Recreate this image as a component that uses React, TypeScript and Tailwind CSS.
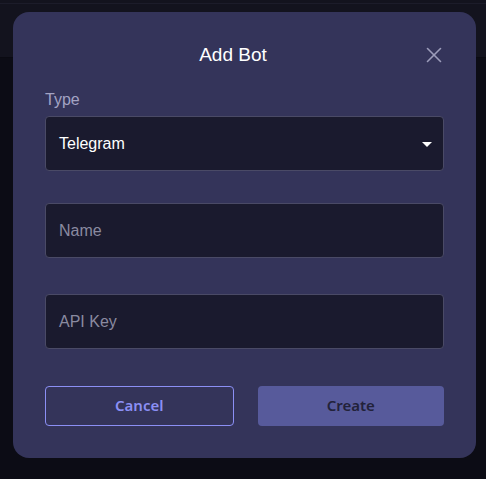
import { X } from 'lucide-react';

export default function App() {
  return (
    <div className="relative h-[479px] w-[486px] overflow-hidden bg-[#0c0c15] font-['Liberation_Sans',Arial,sans-serif]">
      <div className="h-[58px] border-b border-[#0a0a12] bg-[#13131e] pt-[3px]">
        <div className="h-px bg-[#1c1c2a]" />
      </div>

      <div className="absolute inset-0 pl-[13px] pt-[12px]">
        <div className="flex h-[446px] w-[463px] flex-col rounded-2xl bg-[#34345a] px-8 pt-[29px] pb-8">
          <div className="mb-[19px] flex h-7 items-center">
            <h2 className="flex-1 text-center text-[19px] text-white">Add Bot</h2>
            <button className="-mr-[3px] flex h-7 w-[26px] items-center justify-center text-[#9c9cba]">
              <X className="h-[26px] w-[26px]" strokeWidth={1.5} />
            </button>
          </div>

          <label className="mb-1 block text-[16px] leading-6 text-[#a3a3c4]">Type</label>
          <div className="flex h-[55px] items-center justify-between rounded border border-[#4a4a66] bg-[#1a1a2e] pl-[13px] pr-[11px]">
            <span className="text-[16px] text-white">Telegram</span>
            <svg width="10" height="5" viewBox="0 0 10 5" className="mt-px">
              <path d="M0 0 L10 0 L5 5 Z" fill="#ffffff" />
            </svg>
          </div>

          <div className="mt-8 flex h-[55px] items-center rounded border border-[#4a4a66] bg-[#1a1a2e] pl-[13px]">
            <span className="text-[16px] text-[#8a8aa0]">Name</span>
          </div>

          <div className="mt-9 flex h-[55px] items-center rounded border border-[#4a4a66] bg-[#1a1a2e] pl-[13px]">
            <span className="text-[16px] text-[#8a8aa0]">API Key</span>
          </div>

          <div className="mt-auto flex gap-6">
            <button className="h-10 flex-1 rounded border border-[#8b8ff5] pb-[2px] font-['Noto_Sans',sans-serif] text-[15px] font-semibold text-[#8b8ff5]">
              Cancel
            </button>
            <button className="h-10 flex-1 rounded bg-[#575a9b] pb-[2px] font-['Noto_Sans',sans-serif] text-[15px] font-semibold text-[#22223a]">
              Create
            </button>
          </div>
        </div>
      </div>
    </div>
  );
}
